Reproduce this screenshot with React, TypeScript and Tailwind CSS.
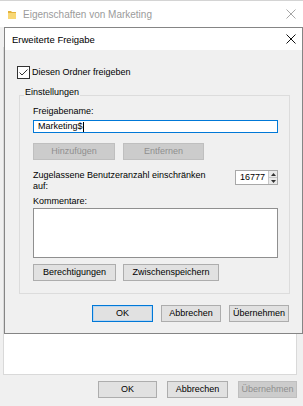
import type { ReactNode } from "react";

const CloseIcon = ({ color }: { color: string }) => (
  <svg width="10" height="10" viewBox="0 0 10 10" className="shrink-0">
    <path d="M0.5 0.5 L9.5 9.5 M9.5 0.5 L0.5 9.5" stroke={color} strokeWidth="1" fill="none" />
  </svg>
);

const FolderIcon = () => (
  <svg width="8" height="9" viewBox="0 0 8 9" className="shrink-0">
    <path d="M0 1 H3 L4 2 H8 V9 H0 Z" fill="#e3b23c" />
    <path d="M0 3 H8 V9 H0 Z" fill="#f8d775" />
  </svg>
);

const Button = ({
  label,
  width,
  disabled = false,
  primary = false,
}: {
  label: string;
  width: string;
  disabled?: boolean;
  primary?: boolean;
}) => {
  let look = "bg-[#e1e1e1] border-[#adadad] text-black";
  if (disabled) look = "bg-[#cccccc] border-[#bfbfbf] text-[#8f8f8f]";
  if (primary) look = "bg-[#e1e1e1] border-[#0078d7] text-black shadow-[inset_0_0_0_1px_#b9d6f0]";
  return (
    <div className={`${width} ${look} h-[17px] border flex items-center justify-center shrink-0`}>
      {label}
    </div>
  );
};

const Spinner = () => (
  <div className="w-[43px] h-[15px] border border-[#a8a8a8] bg-white flex">
    <div className="flex-1 pl-[4px] flex items-center">16777</div>
    <div className="w-[9px] border-l border-[#c8c8c8] bg-[#eaeaea] flex flex-col">
      <div className="flex-1 flex items-center justify-center border-b border-[#c8c8c8]">
        <svg width="5" height="3" viewBox="0 0 5 3">
          <path d="M0 3 L2.5 0 L5 3 Z" fill="#333" />
        </svg>
      </div>
      <div className="flex-1 flex items-center justify-center">
        <svg width="5" height="3" viewBox="0 0 5 3">
          <path d="M0 0 L2.5 3 L5 0 Z" fill="#333" />
        </svg>
      </div>
    </div>
  </div>
);

const GroupBox = ({ title, children }: { title: string; children: ReactNode }) => (
  <div className="relative mt-[16px] ml-[14px] w-[271px] h-[199px] border border-[#dcdcdc] pl-[13px] pr-[11px] flex flex-col">
    <span className="absolute left-[4px] -top-[9px] px-[1px] bg-[#f0f0f0] leading-[11px]">{title}</span>
    {children}
  </div>
);

export default function App() {
  return (
    <div className="relative w-[303px] h-[406px] overflow-hidden bg-[#f0f0f0] text-black text-[9px] leading-[11px] font-['Liberation_Sans',Arial,sans-serif]">
      {/* Eigenschaften window behind */}
      <div className="flex flex-col h-full">
        <div className="h-[27px] shrink-0 bg-white border-t border-[#d4d4d4] flex items-center pl-[8px] pr-[7px]">
          <FolderIcon />
          <span className="ml-[7px] text-[10px] text-[#9b9b9b]">Eigenschaften von Marketing</span>
          <div className="ml-auto">
            <CloseIcon color="#a6a6a6" />
          </div>
        </div>
        <div className="flex-1 flex flex-col pl-[3px] pr-[6px]">
          <div className="mt-[20px] w-[294px] h-[328px] bg-white border border-[#d9d9d9]" />
          <div className="mt-[6px] flex justify-end gap-[10px]">
            <Button label="OK" width="w-[59px]" />
            <Button label="Abbrechen" width="w-[61px]" />
            <Button label="Übernehmen" width="w-[59px]" disabled />
          </div>
        </div>
      </div>

      {/* Erweiterte Freigabe dialog */}
      <div className="absolute left-[4px] top-[27px] w-[299px] h-[307px] border border-[#858585] flex flex-col">
        <div className="h-[22px] shrink-0 bg-white flex items-center pl-[7px] pr-[6px]">
          <span className="text-[9.5px]">Erweiterte Freigabe</span>
          <div className="ml-auto">
            <CloseIcon color="#111" />
          </div>
        </div>
        <div className="flex-1 bg-[#f0f0f0] flex flex-col">
          <div className="mt-[16px] pl-[12px] flex items-center gap-[2px]">
            <div className="w-[13px] h-[13px] border border-[#333] bg-white">
              <svg width="11" height="11" viewBox="0 0 11 11">
                <path d="M1.5 5.5 L4 8 L9.5 2.5" stroke="#333" strokeWidth="1" fill="none" />
              </svg>
            </div>
            <span>Diesen Ordner freigeben</span>
          </div>

          <GroupBox title="Einstellungen">
            <div className="mt-[10px]">Freigabename:</div>
            <div className="mt-[3px] h-[13px] border border-[#0078d7] bg-white pl-[4px] flex items-center">
              Marketing$<span className="w-px h-[10px] bg-black" />
            </div>
            <div className="mt-[10px] flex gap-[8px]">
              <Button label="Hinzufügen" width="w-[82px]" disabled />
              <Button label="Entfernen" width="w-[81px]" disabled />
            </div>
            <div className="mt-[10px] flex justify-between items-start">
              <div>
                Zugelassene Benutzeranzahl einschränken
                <br />
                auf:
              </div>
              <Spinner />
            </div>
            <div className="mt-[4px]">Kommentare:</div>
            <div className="mt-[1px] h-[50px] border border-[#8f8f8f] bg-white" />
            <div className="mt-[6px] flex gap-[7px]">
              <Button label="Berechtigungen" width="w-[83px]" />
              <Button label="Zwischenspeichern" width="w-[96px]" />
            </div>
          </GroupBox>

          <div className="mt-[11px] pr-[13px] flex justify-end gap-[8px]">
            <Button label="OK" width="w-[61px]" primary />
            <Button label="Abbrechen" width="w-[60px]" />
            <Button label="Übernehmen" width="w-[60px]" />
          </div>
        </div>
      </div>
    </div>
  );
}
